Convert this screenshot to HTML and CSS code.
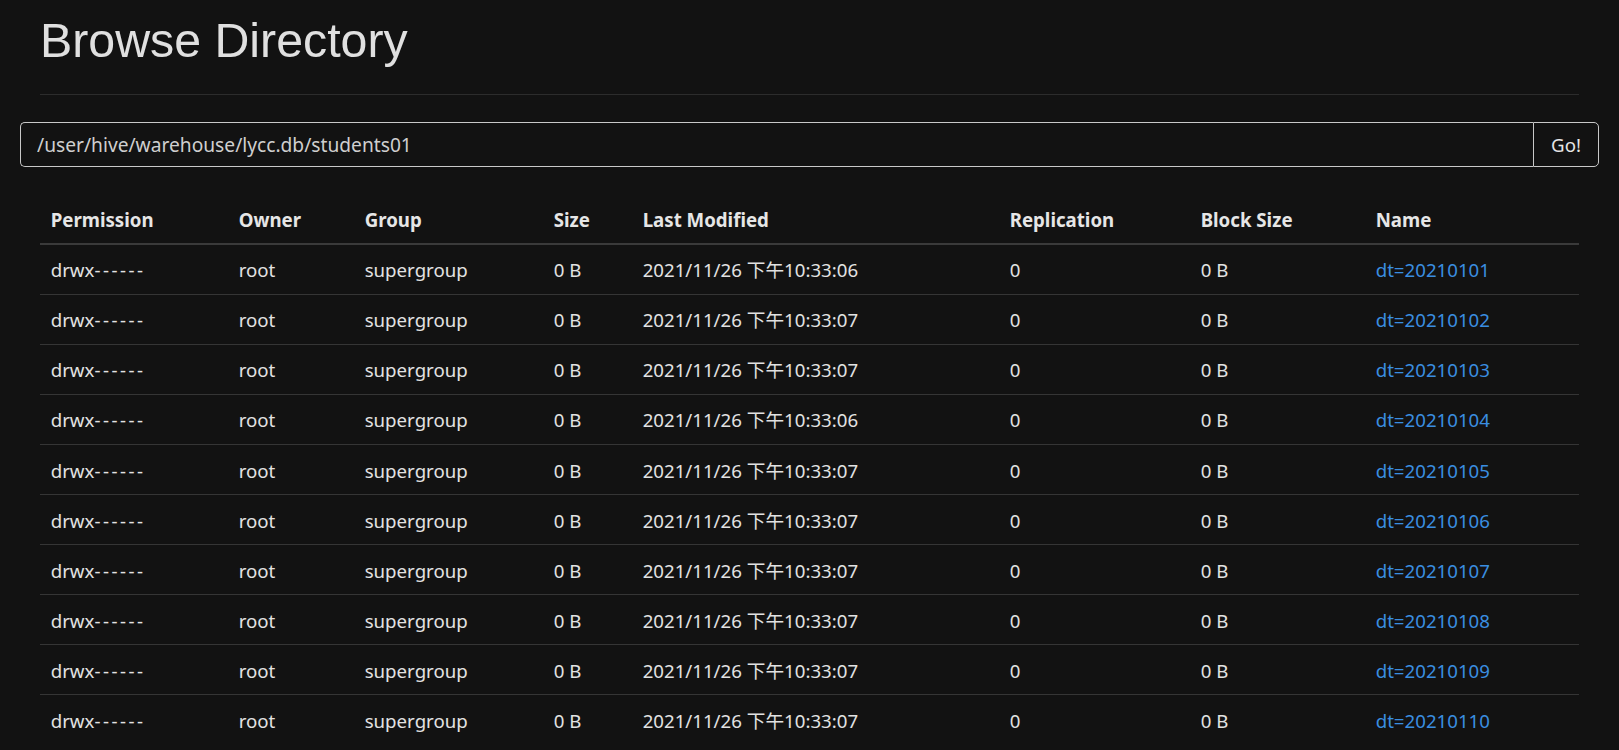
FILE: index.html
```html
<!DOCTYPE html>
<html lang="zh">
<head>
<meta charset="utf-8">
<title>Browse Directory</title>
<link rel="stylesheet" href="styles.css">
</head>
<body>
<div class="container">
  <div class="page-header">
    <h1>Browse Directory</h1>
  </div>
  <form class="search" onsubmit="return false">
    <input class="search-input" type="text" value="/user/hive/warehouse/lycc.db/students01">
    <button class="search-btn" type="button">Go!</button>
  </form>
  <table class="listing">
    <colgroup>
      <col class="c-perm"><col class="c-owner"><col class="c-group"><col class="c-size">
      <col class="c-mod"><col class="c-rep"><col class="c-block"><col class="c-name">
    </colgroup>
    <thead>
      <tr><th>Permission</th><th>Owner</th><th>Group</th><th>Size</th><th>Last Modified</th><th>Replication</th><th>Block Size</th><th>Name</th></tr>
    </thead>
    <tbody>
      <tr><td>drwx<span class="dash">------</span></td><td>root</td><td>supergroup</td><td>0 B</td><td>2021/11/26 下午10:33:06</td><td>0</td><td>0 B</td><td><a href="#">dt=20210101</a></td></tr>
      <tr><td>drwx<span class="dash">------</span></td><td>root</td><td>supergroup</td><td>0 B</td><td>2021/11/26 下午10:33:07</td><td>0</td><td>0 B</td><td><a href="#">dt=20210102</a></td></tr>
      <tr><td>drwx<span class="dash">------</span></td><td>root</td><td>supergroup</td><td>0 B</td><td>2021/11/26 下午10:33:07</td><td>0</td><td>0 B</td><td><a href="#">dt=20210103</a></td></tr>
      <tr><td>drwx<span class="dash">------</span></td><td>root</td><td>supergroup</td><td>0 B</td><td>2021/11/26 下午10:33:06</td><td>0</td><td>0 B</td><td><a href="#">dt=20210104</a></td></tr>
      <tr><td>drwx<span class="dash">------</span></td><td>root</td><td>supergroup</td><td>0 B</td><td>2021/11/26 下午10:33:07</td><td>0</td><td>0 B</td><td><a href="#">dt=20210105</a></td></tr>
      <tr><td>drwx<span class="dash">------</span></td><td>root</td><td>supergroup</td><td>0 B</td><td>2021/11/26 下午10:33:07</td><td>0</td><td>0 B</td><td><a href="#">dt=20210106</a></td></tr>
      <tr><td>drwx<span class="dash">------</span></td><td>root</td><td>supergroup</td><td>0 B</td><td>2021/11/26 下午10:33:07</td><td>0</td><td>0 B</td><td><a href="#">dt=20210107</a></td></tr>
      <tr><td>drwx<span class="dash">------</span></td><td>root</td><td>supergroup</td><td>0 B</td><td>2021/11/26 下午10:33:07</td><td>0</td><td>0 B</td><td><a href="#">dt=20210108</a></td></tr>
      <tr><td>drwx<span class="dash">------</span></td><td>root</td><td>supergroup</td><td>0 B</td><td>2021/11/26 下午10:33:07</td><td>0</td><td>0 B</td><td><a href="#">dt=20210109</a></td></tr>
      <tr><td>drwx<span class="dash">------</span></td><td>root</td><td>supergroup</td><td>0 B</td><td>2021/11/26 下午10:33:07</td><td>0</td><td>0 B</td><td><a href="#">dt=20210110</a></td></tr>
    </tbody>
  </table>
</div>
</body>
</html>
```

FILE: styles.css
```css
html, body {
  margin: 0;
  background: #121212;
}
body {
  font-family: "Noto Sans", "Noto Sans CJK SC", sans-serif;
  font-size: 18.67px;
  line-height: 26.67px;
  color: #e2e2e2;
}
.container {
  padding: 0 20px;
}
.page-header {
  margin: 0 20px;
  padding: 14px 0 27px;
  border-bottom: 1px solid #2c2c2c;
}
.page-header h1 {
  margin: 0;
  font-family: "Liberation Sans", Arial, sans-serif;
  font-size: 48.3px;
  line-height: 52.8px;
  font-weight: 400;
  color: #e0e0e0;
}
.search {
  display: flex;
  margin: 27px 0 0;
  height: 45px;
  box-sizing: border-box;
}
.search-input {
  flex: 1;
  min-width: 0;
  box-sizing: border-box;
  height: 45px;
  margin: 0;
  padding: 0 16px;
  background: #121212;
  color: #cfcfcf;
  border: 1px solid #c8c8c8;
  border-right: 0;
  border-radius: 5px 0 0 5px;
  font-family: "Noto Sans", "Noto Sans CJK SC", sans-serif;
  font-size: 19.2px;
  outline: none;
}
.search-btn {
  width: 66px;
  box-sizing: border-box;
  height: 45px;
  margin: 0;
  padding: 0;
  background: #121212;
  color: #e6e6e6;
  border: 1px solid #c8c8c8;
  border-radius: 0 5px 5px 0;
  font-family: "Noto Sans", "Noto Sans CJK SC", sans-serif;
  font-size: 18.67px;
  cursor: pointer;
}
.listing {
  width: calc(100% - 40px);
  margin: 28px 20px 0;
  border-collapse: collapse;
  table-layout: fixed;
}
.c-perm { width: 188px; }
.c-owner { width: 126px; }
.c-group { width: 189px; }
.c-size { width: 89px; }
.c-mod { width: 367px; }
.c-rep { width: 191px; }
.c-block { width: 175px; }
.c-name { width: auto; }
.listing th,
.listing td {
  padding: 12.67px 10.67px 8.67px;
  text-align: left;
  vertical-align: top;
  white-space: nowrap;
}
.listing th {
  font-weight: 700;
  color: #e6e6e6;
  line-height: 26.67px;
  border-bottom: 2.67px solid #3a3a3a;
}
.listing td {
  line-height: 26.67px;
  padding-bottom: 9.7px;
  border-top: 1.33px solid #353535;
}
.dash {
  letter-spacing: 2.5px;
}
.listing a {
  color: #3a8ee0;
  text-decoration: none;
}
```
